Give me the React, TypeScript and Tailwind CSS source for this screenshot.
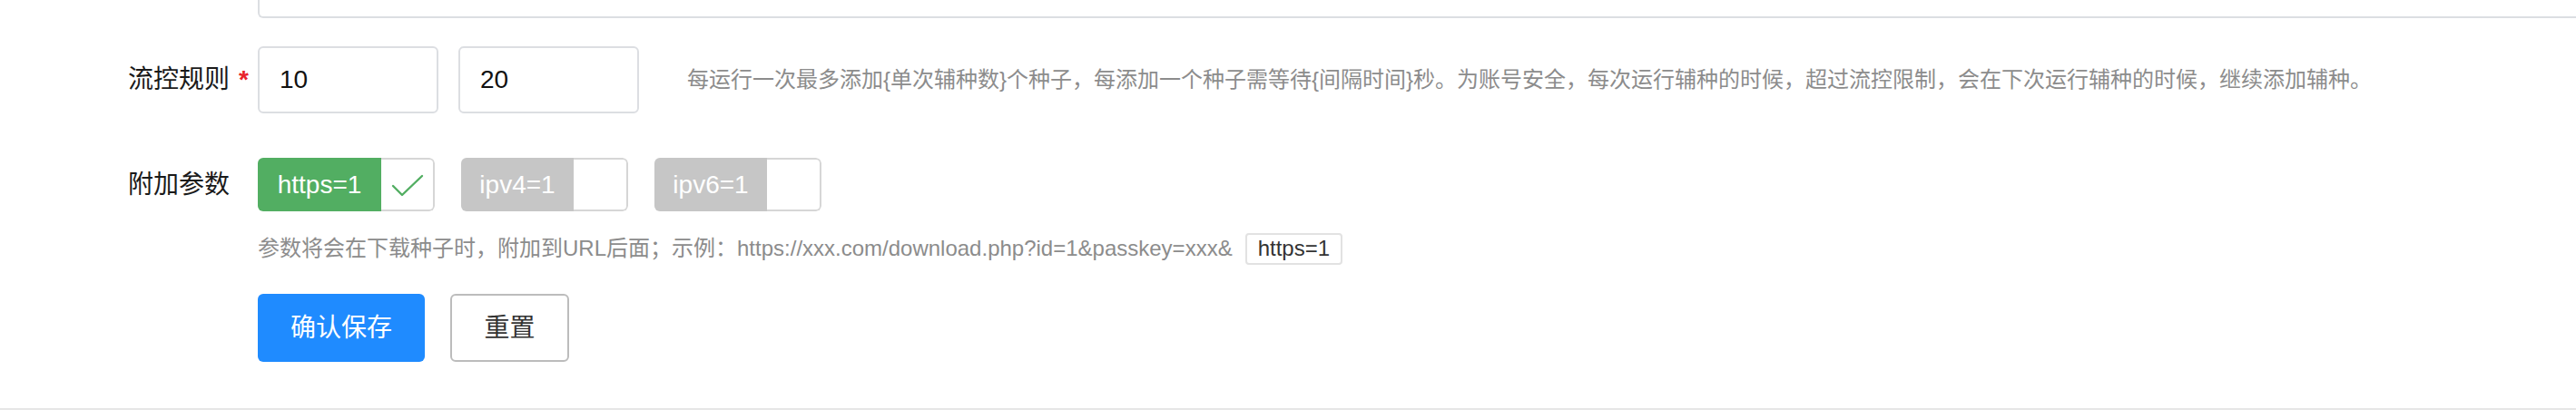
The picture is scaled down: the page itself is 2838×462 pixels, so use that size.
type ParamTag = { label: string; checked: boolean; width: string; labelWidth: string };

const tags: ParamTag[] = [
  { label: "https=1", checked: true, width: "w-[195px]", labelWidth: "w-[136px]" },
  { label: "ipv4=1", checked: false, width: "w-[184px]", labelWidth: "w-[124px]" },
  { label: "ipv6=1", checked: false, width: "w-[184px]", labelWidth: "w-[124px]" },
];

function FieldLabel({ text, required }: { text: string; required?: boolean }) {
  return (
    <div className="flex w-[284px] shrink-0 items-center">
      <span className="w-[253px] text-right text-[28px] leading-none text-[#1a1a1a]">{text}</span>
      <span className="w-[31px] pl-[10px] text-[28px] font-bold leading-none text-[#e8232c]">
        {required ? "*" : ""}
      </span>
    </div>
  );
}

function CheckMark() {
  return (
    <svg width="36" height="26" viewBox="0 0 36 26" fill="none" className="mt-[2px]">
      <polyline points="2,13 12,23 34,2" stroke="#52ae62" strokeWidth="2.4" strokeLinecap="round" strokeLinejoin="round" />
    </svg>
  );
}

function TagCheckbox({ tag }: { tag: ParamTag }) {
  return (
    <div className={`flex h-[59px] ${tag.width} overflow-hidden rounded-[6px]`}>
      <div
        className={`flex ${tag.labelWidth} items-center justify-center text-[28px] text-white ${
          tag.checked ? "bg-[#52ae62]" : "bg-[#c6c6c6]"
        }`}
      >
        {tag.label}
      </div>
      <div className="flex flex-1 items-center justify-center rounded-r-[6px] border-2 border-l-0 border-[#d6d6d6] bg-white">
        {tag.checked && <CheckMark />}
      </div>
    </div>
  );
}

export default function App() {
  return (
    <div
      className="h-[462px] w-full overflow-hidden bg-white"
      style={{ fontFamily: '"Liberation Sans", "Noto Sans CJK SC", sans-serif' }}
    >
      {/* tail of the field above */}
      <div className="flex pl-[284px]">
        <div className="-mr-4 h-[20px] flex-1 rounded-bl-[6px] border-b-2 border-l-2 border-[#dcdee2]" />
      </div>

      <div className="mt-[31px] flex h-[74px] items-center">
        <FieldLabel text="流控规则" required />
        <div className="flex gap-[22px]">
          <input
            defaultValue="10"
            className="h-[74px] w-[199px] rounded-[6px] border-2 border-[#dcdee2] px-[22px] text-[28px] text-[#111] outline-none"
          />
          <input
            defaultValue="20"
            className="h-[74px] w-[199px] rounded-[6px] border-2 border-[#dcdee2] px-[22px] text-[28px] text-[#111] outline-none"
          />
        </div>
        <p className="ml-[53px] text-[24px] text-[#8c8c8c]">
          每运行一次最多添加{"{"}单次辅种数{"}"}个种子，每添加一个种子需等待{"{"}间隔时间{"}"}秒。为账号安全，每次运行辅种的时候，超过流控限制，会在下次运行辅种的时候，继续添加辅种。
        </p>
      </div>

      <div className="mt-[49px] flex h-[59px] items-center">
        <FieldLabel text="附加参数" />
        <div className="flex gap-[29px]">
          {tags.map((tag) => (
            <TagCheckbox key={tag.label} tag={tag} />
          ))}
        </div>
      </div>

      <div className="mt-[23px] flex h-[36px] items-center pl-[284px] text-[24px] text-[#8c8c8c]">
        <span>参数将会在下载种子时，附加到URL后面；示例：https://xxx.com/download.php?id=1&amp;passkey=xxx&amp;</span>
        <span className="ml-[14px] flex h-[35px] items-center rounded-[4px] border-2 border-[#e2e2e2] px-[12px] text-[#333]">
          https=1
        </span>
      </div>

      <div className="mt-[32px] flex gap-[28px] pl-[284px]">
        <button
          type="button"
          className="h-[75px] w-[184px] rounded-[6px] bg-[#1f8bff] text-[28px] text-white"
        >
          确认保存
        </button>
        <button
          type="button"
          className="h-[75px] w-[131px] rounded-[6px] border-2 border-[#bcbcbc] bg-white text-[28px] text-[#333]"
        >
          重置
        </button>
      </div>

      <div className="mt-[51px] h-[2px] w-full bg-[#e6e6e6]" />
    </div>
  );
}
